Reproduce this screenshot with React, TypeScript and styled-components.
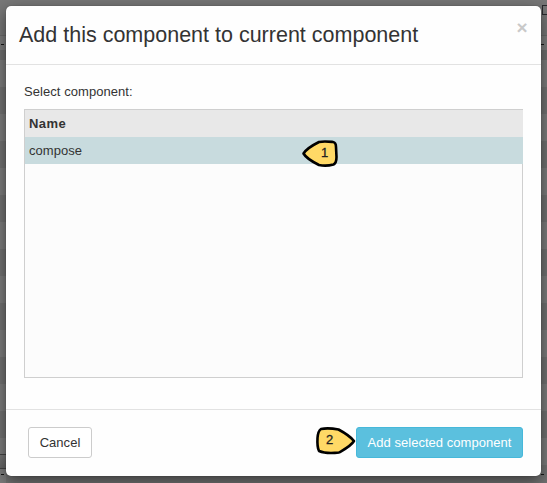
import React from "react";
import styled, { createGlobalStyle } from "styled-components";

const Global = createGlobalStyle`
  * { box-sizing: border-box; }
  body {
    margin: 0;
    overflow: hidden;
    background: #777;
    font-family: "Liberation Sans", Arial, sans-serif;
    font-size: 13px;
    line-height: 18px;
    color: #333;
  }
`;

/* The dimmed page behind the dialog: striped rows between two toolbars. */
const Page = styled.div`
  position: relative;
  display: flex;
  justify-content: center;
  align-items: flex-start;
  width: 547px;
  height: 483px;
  padding-top: 6px;
  overflow: hidden;
  background:
    linear-gradient(#151515, #151515) 1px 44px / 3px 1px no-repeat,
    linear-gradient(#151515, #151515) 541px 44px / 3px 1px no-repeat,
    linear-gradient(#151515, #151515) 1px 474px / 3px 1px no-repeat,
    linear-gradient(#151515, #151515) 541px 474px / 3px 1px no-repeat,
    linear-gradient(#444 1px, #777 1px, #666 14px, #444 14px, #444 15px, #7c7c7c 15px) 0 454px / 6px 29px no-repeat,
    linear-gradient(#777 35px, #6b6b6b 35px, #6b6b6b 36px, #7c7c7c 36px, #7c7c7c 50px, #6e6e6e 50px) 0 0 / 100% 60px no-repeat,
    repeating-linear-gradient(#7c7c7c 0, #7c7c7c 27px, #727272 27px, #727272 54px) 0 60px / 100% 423px no-repeat;
`;

const BackdropField = styled.i`
  position: absolute;
  top: 5px;
  right: -7px;
  width: 12px;
  height: 10px;
  border: 1px solid #29292d;
`;

const Modal = styled.section`
  position: relative;
  display: flex;
  flex-direction: column;
  width: 535px;
  height: 470px;
  background: #fefefe;
  border-radius: 5px;
  box-shadow: 0 0 1px rgba(0, 0, 0, 0.5), 0 5px 15px rgba(0, 0, 0, 0.5);
`;

const Header = styled.header`
  display: flex;
  justify-content: space-between;
  height: 59px;
  padding: 14px 13px;
  border-bottom: 1px solid #e2e2e2;
`;

const Title = styled.h1`
  margin: 0;
  font-size: 21.5px;
  font-weight: 400;
  line-height: 30px;
  white-space: nowrap;
`;

const Close = styled.button`
  width: 12px;
  height: 16px;
  padding: 0;
  border: 0;
  background: none;
  color: #c9c9c9;
  font: bold 19px/16px "Liberation Sans", Arial, sans-serif;
`;

const Body = styled.main`
  display: flex;
  flex-direction: column;
  height: 345px;
  padding: 18px 18px 0;
  border-bottom: 1px solid #e2e2e2;
`;

const Label = styled.div`
  height: 26px;
  letter-spacing: 0.06px;
`;

const List = styled.div`
  display: flex;
  flex-direction: column;
  height: 269px;
  border: 1px solid #cfcfcf;
  background: #fcfcfc;
`;

const Row = styled.div<{ $kind: "head" | "selected" }>`
  height: 27px;
  margin-right: -1px;
  padding: 5px 4px;
  font-weight: ${(p) => (p.$kind === "head" ? 700 : 400)};
  letter-spacing: ${(p) => (p.$kind === "head" ? "0.4px" : "0.05px")};
  background: ${(p) => (p.$kind === "head" ? "#e8e8e8" : "#c8dbde")};
`;

const Footer = styled.footer`
  display: flex;
  justify-content: space-between;
  padding: 17px 18px 0 22px;
`;

const Button = styled.button<{ $primary?: boolean }>`
  width: ${(p) => (p.$primary ? 167 : 64)}px;
  height: 31px;
  padding: 0;
  border: 1px solid ${(p) => (p.$primary ? "#46b8da" : "#ccc")};
  border-radius: 3px;
  background: ${(p) => (p.$primary ? "#5bc0de" : "#fff")};
  color: ${(p) => (p.$primary ? "#fff" : "#333")};
  font: 13px/18px "Liberation Sans", Arial, sans-serif;
  letter-spacing: 0.04px;
  white-space: nowrap;
`;

const Marker = styled.svg<{ $x: number; $y: number }>`
  position: absolute;
  left: ${(p) => p.$x}px;
  top: ${(p) => p.$y}px;
  overflow: visible;
  path {
    fill: #ffd966;
    stroke: #000;
    stroke-width: 2.6px;
    stroke-linejoin: round;
  }
  text {
    font-size: 13px;
    fill: #222;
    stroke: #222;
    stroke-width: 0.3px;
  }
`;

export default function App() {
  return (
    <>
      <Global />
      <Page>
        <BackdropField />
        <Modal>
          <Header>
            <Title>Add this component to current component</Title>
            <Close aria-label="Close">×</Close>
          </Header>
          <Body>
            <Label>Select component:</Label>
            <List>
              <Row $kind="head">Name</Row>
              <Row $kind="selected">compose</Row>
            </List>
          </Body>
          <Footer>
            <Button>Cancel</Button>
            <Button $primary>Add selected component</Button>
          </Footer>
        </Modal>
        <Marker $x={302} $y={140} width="36" height="27">
          <path d="M1.5 13.5C5 8 11 5 17 2C22 1 26 1.5 31 2Q34 2.5 34 7L34.5 17Q34.5 23 31.5 24.5Q24 26.5 17 25C11 22 4 18 1.5 13.5Z" />
          <text x="19" y="17">1</text>
        </Marker>
        <Marker $x={316} $y={427} width="39" height="27">
          <path d="M38 14C34 9 29 6 22.5 2.5Q12 .5 5 2Q2 4 1.5 11Q1 20 3 24Q10 27 23 25.5C29 22 35 19 38 14Z" />
          <text x="10" y="17">2</text>
        </Marker>
      </Page>
    </>
  );
}
